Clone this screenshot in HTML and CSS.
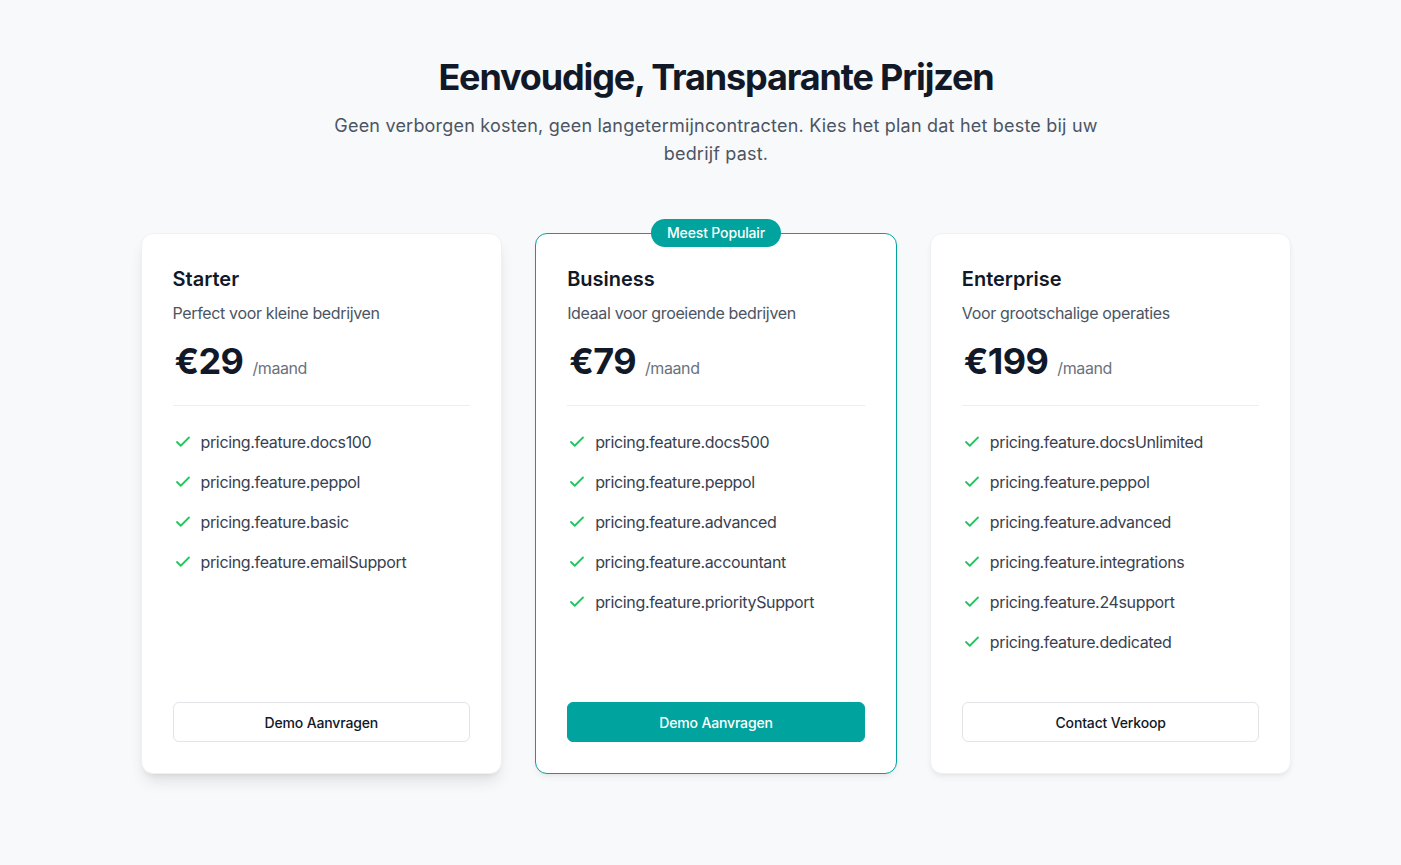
FILE: index.html
```html
<!DOCTYPE html>
<html lang="nl">
<head>
<meta charset="utf-8">
<title>Prijzen</title>
<link rel="stylesheet" href="styles.css">
</head>
<body>
<section class="pricing">
  <header class="intro">
    <h1 class="title">Eenvoudige, Transparante Prijzen</h1>
    <p class="subtitle">Geen verborgen kosten, geen langetermijncontracten. Kies het plan dat het beste bij uw bedrijf past.</p>
  </header>
  <div class="plans">
    <article class="card card-starter">
      <h2 class="plan-name">Starter</h2>
      <p class="plan-desc">Perfect voor kleine bedrijven</p>
      <div class="price"><span class="amount">€29</span><span class="period">/maand</span></div>
      <ul class="features">
        <li><svg class="check" viewBox="0 0 24 24"><path d="M20 6 9 17l-5-5"/></svg>pricing.feature.docs100</li>
        <li><svg class="check" viewBox="0 0 24 24"><path d="M20 6 9 17l-5-5"/></svg>pricing.feature.peppol</li>
        <li><svg class="check" viewBox="0 0 24 24"><path d="M20 6 9 17l-5-5"/></svg>pricing.feature.basic</li>
        <li><svg class="check" viewBox="0 0 24 24"><path d="M20 6 9 17l-5-5"/></svg>pricing.feature.emailSupport</li>
      </ul>
      <button class="btn btn-outline">Demo Aanvragen</button>
    </article>
    <article class="card card-popular">
      <span class="badge">Meest Populair</span>
      <h2 class="plan-name">Business</h2>
      <p class="plan-desc">Ideaal voor groeiende bedrijven</p>
      <div class="price"><span class="amount">€79</span><span class="period">/maand</span></div>
      <ul class="features">
        <li><svg class="check" viewBox="0 0 24 24"><path d="M20 6 9 17l-5-5"/></svg>pricing.feature.docs500</li>
        <li><svg class="check" viewBox="0 0 24 24"><path d="M20 6 9 17l-5-5"/></svg>pricing.feature.peppol</li>
        <li><svg class="check" viewBox="0 0 24 24"><path d="M20 6 9 17l-5-5"/></svg>pricing.feature.advanced</li>
        <li><svg class="check" viewBox="0 0 24 24"><path d="M20 6 9 17l-5-5"/></svg>pricing.feature.accountant</li>
        <li><svg class="check" viewBox="0 0 24 24"><path d="M20 6 9 17l-5-5"/></svg>pricing.feature.prioritySupport</li>
      </ul>
      <button class="btn btn-primary">Demo Aanvragen</button>
    </article>
    <article class="card">
      <h2 class="plan-name">Enterprise</h2>
      <p class="plan-desc">Voor grootschalige operaties</p>
      <div class="price"><span class="amount">€199</span><span class="period">/maand</span></div>
      <ul class="features">
        <li><svg class="check" viewBox="0 0 24 24"><path d="M20 6 9 17l-5-5"/></svg>pricing.feature.docsUnlimited</li>
        <li><svg class="check" viewBox="0 0 24 24"><path d="M20 6 9 17l-5-5"/></svg>pricing.feature.peppol</li>
        <li><svg class="check" viewBox="0 0 24 24"><path d="M20 6 9 17l-5-5"/></svg>pricing.feature.advanced</li>
        <li><svg class="check" viewBox="0 0 24 24"><path d="M20 6 9 17l-5-5"/></svg>pricing.feature.integrations</li>
        <li><svg class="check" viewBox="0 0 24 24"><path d="M20 6 9 17l-5-5"/></svg>pricing.feature.24support</li>
        <li><svg class="check" viewBox="0 0 24 24"><path d="M20 6 9 17l-5-5"/></svg>pricing.feature.dedicated</li>
      </ul>
      <button class="btn btn-outline">Contact Verkoop</button>
    </article>
  </div>
</section>
</body>
</html>
```

FILE: styles.css
```css
* { box-sizing: border-box; }
html, body { margin: 0; padding: 0; }
body {
  background: #f8f9fb;
  font-family: Inter, "Noto Sans", sans-serif;
  color: #111827;
  min-height: 865px;
}
.pricing {
  padding: 57px 0 64px 31px;
}
.intro {
  text-align: center;
  max-width: 790px;
  margin: 0 auto;
}
.title {
  margin: 0;
  font-size: 36px;
  line-height: 40px;
  font-weight: 700;
  letter-spacing: -1.15px;
  color: #111827;
}
.subtitle {
  margin: 15px auto 0;
  max-width: 780px;
  font-size: 18px;
  line-height: 28px;
  letter-spacing: 0.2px;
  color: #4b5563;
}
.plans {
  margin: 65px auto 0;
  width: 1151px;
  display: grid;
  grid-template-columns: repeat(3, 1fr);
  gap: 33px;
}
.card {
  position: relative;
  background: #fff;
  border: 1px solid #eef0f3;
  border-radius: 12px;
  padding: 31px 31px 31px;
  display: flex;
  flex-direction: column;
  box-shadow: 0 4px 6px -1px rgba(0,0,0,0.06), 0 2px 4px -2px rgba(0,0,0,0.05);
}
.card-starter {
  box-shadow: 0 10px 15px -3px rgba(0,0,0,0.1), 0 4px 6px -4px rgba(0,0,0,0.1);
}
.card-popular {
  border-color: #00a39e;
}
.badge {
  position: absolute;
  top: -15px;
  left: 50%;
  transform: translateX(-50%);
  background: #00a39e;
  color: #fff;
  font-size: 14px;
  font-weight: 500;
  line-height: 28px;
  letter-spacing: -0.15px;
  padding: 0 16px;
  border-radius: 999px;
  white-space: nowrap;
}
.plan-name {
  margin: 0;
  font-size: 20px;
  line-height: 28px;
  font-weight: 600;
  color: #111827;
}
.plan-desc {
  margin: 8px 0 0;
  font-size: 16px;
  line-height: 24px;
  letter-spacing: -0.35px;
  color: #4b5563;
}
.price {
  margin-top: 16px;
  display: flex;
  align-items: baseline;
  padding-bottom: 24px;
  border-bottom: 1px solid #eceef1;
}
.amount {
  font-size: 36px;
  line-height: 40px;
  font-weight: 700;
  color: #111827;
  padding-left: 2px;
  letter-spacing: -0.6px;
}
.period {
  margin-left: 9px;
  font-size: 16px;
  letter-spacing: -0.4px;
  color: #6b7280;
}
.features {
  list-style: none;
  margin: 24px 0 48px;
  padding: 0;
  display: flex;
  flex-direction: column;
  gap: 16px;
  flex: 1;
}
.features li {
  display: flex;
  align-items: center;
  gap: 12px;
  font-size: 16px;
  line-height: 24px;
  letter-spacing: -0.35px;
  color: #374151;
}
.check {
  width: 18px;
  height: 18px;
  flex: none;
  margin-left: 1px;
  margin-right: -3px;
  fill: none;
  stroke: #22c55e;
  stroke-width: 2.4;
  stroke-linecap: round;
  stroke-linejoin: round;
}
.btn {
  width: 100%;
  height: 40px;
  border-radius: 6px;
  font-family: inherit;
  font-size: 14px;
  font-weight: 500;
  letter-spacing: -0.15px;
  cursor: pointer;
}
.btn-outline {
  background: #fff;
  border: 1px solid #e2e4e8;
  color: #111827;
}
.btn-primary {
  background: #00a39e;
  border: 1px solid #00a39e;
  color: #fff;
}
```
